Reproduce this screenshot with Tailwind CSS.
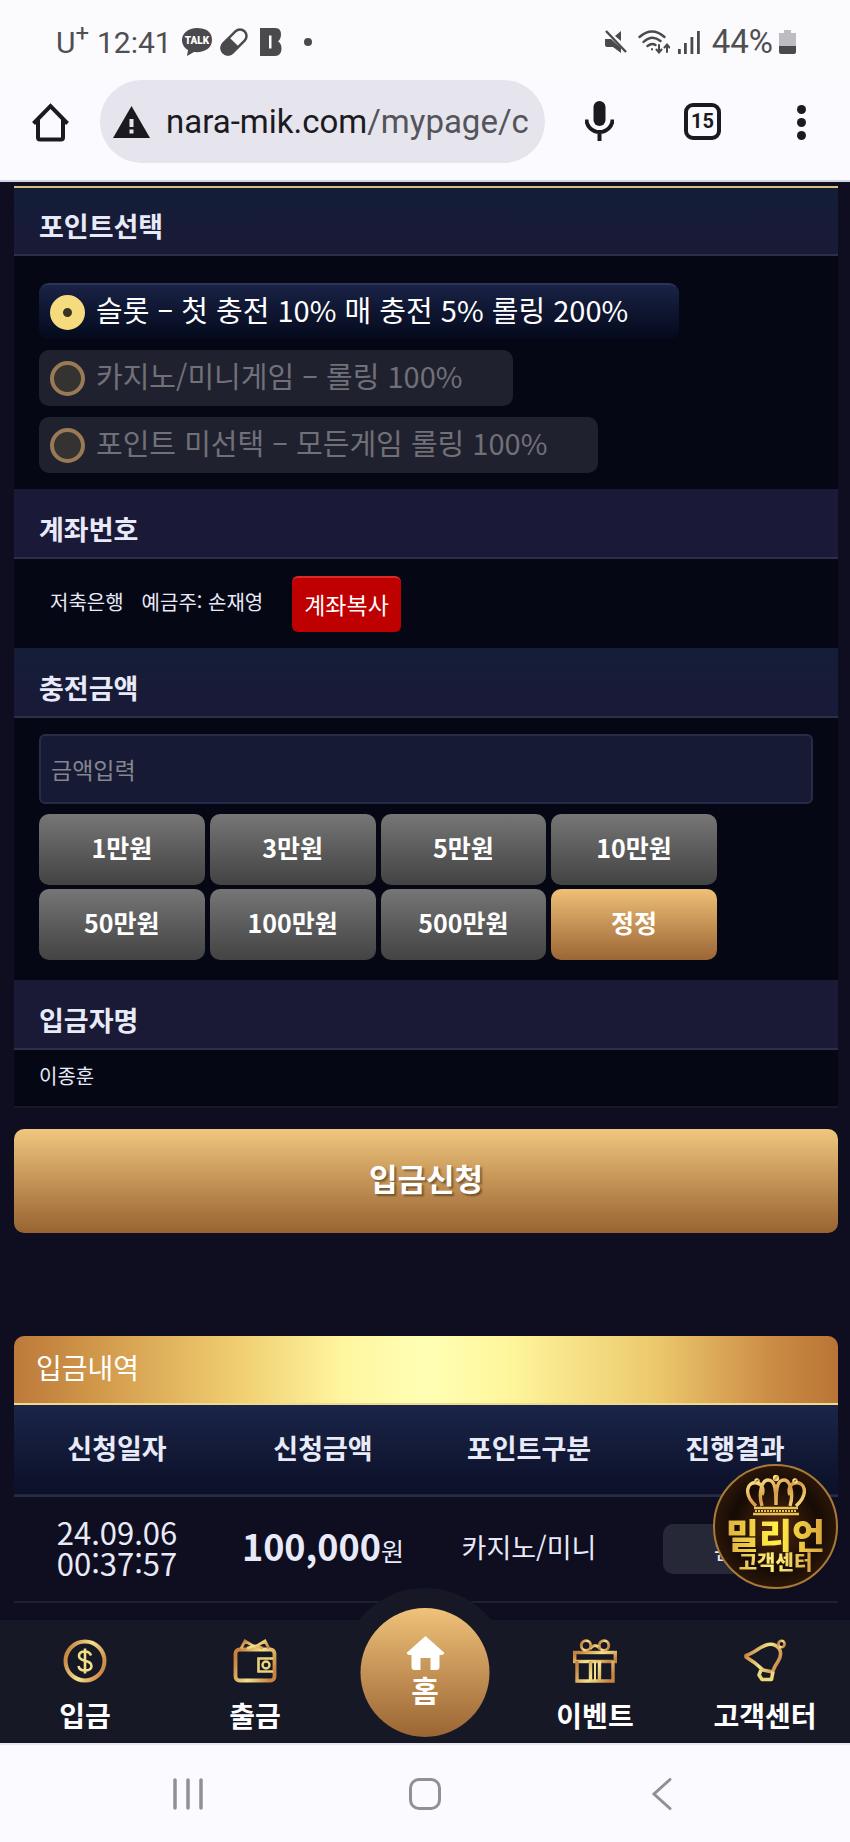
<!DOCTYPE html>
<html lang="ko">

<head>
    <meta charset="UTF-8">
    <meta name="viewport" content="width=device-width, initial-scale=1.0">
    <title>입금신청</title>
    <script src="https://cdn.jsdelivr.net/npm/@tailwindcss/browser@4"></script>
</head>

<body class="bg-[#0e0e20] font-['Noto_Sans_CJK_KR',sans-serif] text-[#e8eaf8]">

    <!-- Status bar -->
    <div class="flex h-20 items-center bg-[#fbfafd] pr-[54px] pl-14 pt-1 font-[Roboto,sans-serif] text-[30px] text-[#4f4e52]">
        <span class="w-[41px]">U<sup class="text-[24px]">+</sup></span>
        <span>12:41</span>
        <svg class="ml-2.5 h-7 w-[30px]" viewBox="0 0 30 28" fill="#4a494d">
            <path d="M15 0C6.500 0 0 5 0 12c0 4.500 2.500 8 6 10l-1 6 7-4c10 1 18-3.500 18-12S23.500 0 15 0z" />
            <text x="15" y="16" text-anchor="middle" font-family="Roboto" font-weight="900" font-size="10" fill="#fff">TALK</text>
        </svg>
        <svg class="ml-2 h-7 w-7" viewBox="0 0 28 28">
            <g transform="rotate(-45 14 14)">
                <rect x="-1" y="7.500" width="30" height="13" rx="6.500" fill="none" stroke="#4a494d" stroke-width="2.500" />
                <path d="M14 6.500v15H5.500a7.500 7.500 0 0 1 0-15z" fill="#4a494d" />
            </g>
        </svg>
        <svg class="ml-3 h-7 w-[22px]" viewBox="0 0 22 28">
            <path d="M0 0h15c5 0 6 3 6 6.500 0 4-2 6-3 7 2 1 3.500 3 3.500 7 0 4-2 7.500-6.500 7.500H0z" fill="#4a494d" />
            <path d="M9 7.500h2.500v13H9z" fill="#fff" />
        </svg>
        <span class="ml-[22px] size-2 rounded-full bg-[#4a494d]"></span>

        <svg class="ml-auto h-6 w-6" viewBox="0 0 24 24" fill="#4a494d">
            <path d="M1 9h6l10 9v5l-8-6H3q-2 0-2-2zM17 1v10l-6-5z" />
            <path d="M2 1l20 21" stroke="#4a494d" stroke-width="2.400" />
        </svg>
        <svg class="ml-2.5 h-6 w-8" viewBox="0 0 32 24" fill="none" stroke="#4a494d" stroke-width="2.400" stroke-linecap="round">
            <path d="M1.500 7Q14-4 26.500 7M5.500 12Q14 4 22.500 11M9.500 16Q14 12.500 17.500 15" />
            <path d="M14 19v.5M21 15v7M18.500 19.500L21 22.500l2.500-3M29 22v-7M26.500 17.500L29 14.500l2.500 3" stroke-width="2" />
        </svg>
        <svg class="ml-2 h-[23px] w-[22px]" viewBox="0 0 22 23" fill="#4a494d">
            <rect x="0" y="18" width="2.800" height="5" />
            <rect x="6" y="12" width="2.800" height="11" />
            <rect x="12.500" y="6" width="2.800" height="17" />
            <rect x="19" y="0" width="2.800" height="23" />
        </svg>
        <span class="ml-3 text-[33px]">44%</span>
        <svg class="ml-1.5 h-6 w-[17px]" viewBox="0 0 17 24">
            <path d="M5 0h7v3h5v14H0V3h5z" fill="#bdbcc1" />
            <path d="M0 16h17v6q0 2-2 2H2q-2 0-2-2z" fill="#4a494d" />
        </svg>
    </div>

    <!-- Address bar -->
    <header class="flex h-[102px] items-start border-b-2 border-[#d3d6e2] bg-[#fbfaff] pr-11 pl-8 font-[Roboto,sans-serif] text-[#1b1a20]">
        <button type="button" aria-label="Home" class="mt-[22px]">
            <svg class="h-10 w-[37px]" viewBox="0 0 37 40" fill="none" stroke="#1b1a20" stroke-width="4">
                <path d="M1.500 21.500L18.500 4l17 17.500M6 18v17.500q0 2 2 2h21q2 0 2-2V18" />
            </svg>
        </button>
        <button type="button" class="ml-[31px] flex h-[83px] min-w-0 flex-1 items-center rounded-full bg-[#e6e5ee] pl-[13px]">
            <svg class="h-8 w-[37px] shrink-0" viewBox="0 0 37 32">
                <path d="M18.500 0L37 32H0z" fill="#1b1a20" />
                <path d="M16.500 13h4v8h-4zM16.500 23.500h4v4h-4z" fill="#e6e5ee" />
            </svg>
            <span class="ml-4 overflow-hidden text-[33px] whitespace-nowrap">nara-mik.com<span class="text-[#55545b]">/mypage/c</span></span>
        </button>
        <button type="button" aria-label="Voice search" class="ml-10 mt-[21px]">
            <svg class="h-10 w-[29px]" viewBox="0 0 29 40">
                <rect x="8.500" y="0" width="12" height="25" rx="6" fill="#1b1a20" />
                <path d="M1.500 18.500a13 12.500 0 0 0 26 0M14.500 31v9" fill="none" stroke="#1b1a20" stroke-width="4" />
            </svg>
        </button>
        <button type="button" class="ml-[70px] mt-[23px] size-[37px] rounded-[9px] border-4 border-[#1b1a20] text-[20px] leading-[29px] font-bold">15</button>
        <button type="button" aria-label="Menu" class="ml-[76px] mt-[25px] flex flex-col gap-1">
            <span class="size-[9px] rounded-full bg-[#1b1a20]"></span>
            <span class="size-[9px] rounded-full bg-[#1b1a20]"></span>
            <span class="size-[9px] rounded-full bg-[#1b1a20]"></span>
        </button>
    </header>

    <main class="pt-1 pr-3 pb-[17px] pl-3.5">
        <form>
            <!-- Point selection -->
            <section class="bg-[#050714]">
                <h2 class="flex h-[70px] items-center border-t-2 border-b-2 border-t-[#d9bf7c] border-b-[#2c3047] bg-linear-to-b from-[#131d38] to-[#1a1a36] px-[25px] pt-2.5 text-[27px] font-bold">포인트선택</h2>
                <div class="flex flex-col items-start gap-[11px] px-[25px] pt-[27px] pb-4 text-[29px]">
                    <label class="flex h-14 items-center gap-[11px] rounded-[10px] border-t-2 border-[#2a355c] bg-linear-to-b from-[#1a2246] to-[#050a1c] pr-[51px] pl-[11px] text-white">
                        <input type="radio" name="point" checked class="size-[35px] appearance-none rounded-full border-[13px] border-[#f5db7e] bg-[#3a3222]">
                        <span class="pb-1">슬롯 – 첫 충전 10% 매 충전 5% 롤링 200%</span>
                    </label>
                    <label class="flex h-14 items-center gap-[11px] rounded-[10px] bg-[#20212e] pr-[51px] pl-[11px] text-[#707079]">
                        <input type="radio" name="point" class="size-[35px] appearance-none rounded-full border-4 border-[#9a7a55] bg-[#343332]">
                        <span class="pb-1">카지노/미니게임 – 롤링 100%</span>
                    </label>
                    <label class="flex h-14 items-center gap-[11px] rounded-[10px] bg-[#20212e] pr-[51px] pl-[11px] text-[#707079]">
                        <input type="radio" name="point" class="size-[35px] appearance-none rounded-full border-4 border-[#9a7a55] bg-[#343332]">
                        <span class="pb-1">포인트 미선택 – 모든게임 롤링 100%</span>
                    </label>
                </div>
            </section>

            <!-- Account number -->
            <section class="bg-[#050714]">
                <h2 class="flex h-[70px] items-center border-b-2 border-[#2c3047] bg-[#1a1a38] px-[25px] pt-3 text-[27px] font-bold">계좌번호</h2>
                <div class="flex h-[89px] items-center px-9 text-[20px]">
                    <span class="pb-1">저축은행</span>
                    <span class="ml-[18px] pb-1">예금주: 손재영</span>
                    <button type="button" class="ml-[29px] h-14 rounded-[6px] border-t-2 border-[#d82a2a] bg-[#bf0000] px-3 text-[23px] text-white">계좌복사</button>
                </div>
            </section>

            <!-- Amount -->
            <section class="bg-[#050714]">
                <h2 class="flex h-[70px] items-center border-b-2 border-[#2c3047] bg-linear-to-b from-[#151d39] to-[#191a37] px-[25px] pt-3 text-[27px] font-bold"><label for="amount">충전금액</label></h2>
                <div class="px-[25px] pt-4 pb-5">
                    <input id="amount" type="text" placeholder="금액입력" class="block h-[70px] w-full rounded-[6px] border-2 border-[#262b48] bg-[#171a35] px-2.5 text-[23px] placeholder:text-[#85868f]">
                    <div class="mt-2.5 grid max-w-[678px] grid-cols-4 gap-x-[5px] gap-y-1 text-[25px] font-bold text-white text-shadow-[2px_2px_2px_#0008]">
                        <button type="button" class="h-[71px] rounded-[10px] bg-linear-to-b from-[#767676] to-[#434343] pb-1">1만원</button>
                        <button type="button" class="h-[71px] rounded-[10px] bg-linear-to-b from-[#767676] to-[#434343] pb-1">3만원</button>
                        <button type="button" class="h-[71px] rounded-[10px] bg-linear-to-b from-[#767676] to-[#434343] pb-1">5만원</button>
                        <button type="button" class="h-[71px] rounded-[10px] bg-linear-to-b from-[#767676] to-[#434343] pb-1">10만원</button>
                        <button type="button" class="h-[71px] rounded-[10px] bg-linear-to-b from-[#767676] to-[#434343] pb-1">50만원</button>
                        <button type="button" class="h-[71px] rounded-[10px] bg-linear-to-b from-[#767676] to-[#434343] pb-1">100만원</button>
                        <button type="button" class="h-[71px] rounded-[10px] bg-linear-to-b from-[#767676] to-[#434343] pb-1">500만원</button>
                        <button type="reset" class="h-[71px] rounded-[10px] bg-linear-to-b from-[#f0c077] to-[#9b6635] pb-1">정정</button>
                    </div>
                </div>
            </section>

            <!-- Depositor -->
            <section class="border-b-2 border-[#161926] bg-[#050714]">
                <h2 class="flex h-[70px] items-center border-b-2 border-[#2c3047] bg-[#1a1a36] px-[25px] pt-3 text-[27px] font-bold">입금자명</h2>
                <p class="h-14 px-[25px] text-[20px] leading-[51px]">이종훈</p>
            </section>

            <button type="submit" class="mt-[21px] h-[104px] w-full rounded-[10px] bg-linear-to-b from-[#f0c77e] to-[#986331] pb-1.5 text-[31px] font-bold text-white text-shadow-[2px_2px_2px_#0006]">입금신청</button>
        </form>

        <!-- Deposit history -->
        <section class="relative mt-[103px]">
            <h2 class="flex h-[69px] items-center rounded-t-[10px] border-b-2 border-[#f0d994] bg-[linear-gradient(90deg,#bd793b_0%,#cf9548_9%,#f0cd70_27%,#fff6a0_40%,#ffffb4_50%,#fff69c_60%,#ecc86c_78%,#cb8c45_92%,#b97435_100%)] px-[22px] pb-1.5 text-[28px] text-white">입금내역</h2>
            <table class="w-full table-fixed text-center text-[27px]">
                <thead>
                    <tr class="h-[91px] border-b-2 border-[#292b40] bg-linear-to-b from-[#1a2548] to-[#0c1028]">
                        <th class="pb-1">신청일자</th>
                        <th class="pb-1">신청금액</th>
                        <th class="pb-1">포인트구분</th>
                        <th class="pb-1">진행결과</th>
                    </tr>
                </thead>
                <tbody>
                    <tr class="h-[106px] border-b-2 border-[#1e1f30]">
                        <td class="pb-1 text-[31px] leading-[31px]">24.09.06<br>00:37:57</td>
                        <td class="pb-2 text-[25px]"><strong class="text-[36px]">100,000</strong>원</td>
                        <td class="pb-1">카지노/미니</td>
                        <td><button type="button" class="h-[50px] w-[144px] rounded-[10px] bg-[#262737] text-[23px]">완료</button></td>
                    </tr>
                </tbody>
            </table>

            <!-- Floating customer center badge -->
            <a href="#" class="absolute top-32 right-0 flex size-[125px] flex-col items-center rounded-full border-2 border-[#a87a38] bg-radial from-[#5a2a0c] via-[#160b05] to-[#4a270c] pt-[9px]">
                <svg class="h-[41px] w-[60px]" viewBox="0 0 60 41" fill="none" stroke="url(#gold)" stroke-width="3.400">
                    <path d="M10 31C-4 18 2 6 11 8c6 1 7 8 5 12M16 31C12 18 16 5 22 5c6 0 8 6 8 25M50 31C64 18 58 6 49 8c-6 1-7 8-5 12M44 31C48 18 44 5 38 5c-6 0-8 6-8 25" />
                    <path d="M8 33h44M7 39h46" stroke="#e8c255" stroke-width="2.500" />
                    <path d="M9 36h42" stroke="#e8c255" stroke-width="2" stroke-dasharray="2 1" />
                    <circle cx="30" cy="3" r="1.500" />
                    <circle cx="11" cy="6" r="1" />
                    <circle cx="49" cy="6" r="1" />
                </svg>
                <span class="bg-linear-to-r from-[#e0b03f] via-[#fff046] to-[#d9a33b] bg-clip-text text-[36px] leading-9 font-black text-transparent">밀리언</span>
                <span class="bg-linear-to-r from-[#e8bd4f] via-[#fff27a] to-[#d9a33b] bg-clip-text text-[20px] leading-5 font-black text-transparent">고객센터</span>
            </a>
        </section>
    </main>

    <!-- Bottom menu -->
    <nav class="relative grid h-[123px] grid-cols-5 bg-[#171826] text-center text-[28px] leading-[30px] font-bold text-white">
        <svg class="absolute size-0">
            <defs>
                <linearGradient id="gold" x1="0" y1="0" x2="1" y2="1">
                    <stop offset="0" stop-color="#ffe98f" />
                    <stop offset="0.5" stop-color="#d99a45" />
                    <stop offset="1" stop-color="#f6e283" />
                </linearGradient>
                <linearGradient id="rim" x1="0" y1="0.3" x2="1" y2="0.7">
                    <stop offset="0" stop-color="#c8843f" />
                    <stop offset="0.5" stop-color="#f3e38a" />
                    <stop offset="1" stop-color="#c8843f" />
                </linearGradient>
            </defs>
        </svg>
        <a href="#" class="flex flex-col items-center gap-[17px] pt-[19px]">
            <svg class="size-[44px]" viewBox="0 0 44 44" fill="none" stroke="url(#rim)" stroke-width="4">
                <circle cx="22" cy="22" r="19.500" />
                <path d="M28 16.500c-1-3-3.500-4-6-4-3.500 0-6 1.500-6 4.500 0 6.500 12.500 3 12.500 10 0 3-3 4.500-6.500 4.500-3 0-6-1.500-6.500-4.500M22 9.500v25" stroke="#f2df86" stroke-width="2.600" />
            </svg>
            입금
        </a>
        <a href="#" class="flex flex-col items-center gap-[17px] pt-[19px]">
            <svg class="size-[44px]" viewBox="0 0 44 44" fill="none" stroke="url(#rim)" stroke-width="3.800">
                <rect x="2.500" y="10.500" width="39" height="31" rx="4" />
                <path d="M8 9.500L12 2l10 6 10-6 4 7.500M14 9l8-2 8 2" stroke-width="2.800" />
                <path d="M40 19.500H25.500v13H40" stroke="#ecd47c" stroke-width="2.600" />
                <circle cx="33" cy="26" r="3.500" stroke="#ecd47c" stroke-width="2.400" />
            </svg>
            출금
        </a>
        <div></div>
        <a href="#" class="flex flex-col items-center gap-[17px] pt-[19px]">
            <svg class="size-[44px]" viewBox="0 0 44 44" fill="none" stroke="url(#rim)" stroke-width="3.400">
                <rect x="1.700" y="13.500" width="40.600" height="9" />
                <path d="M4 22v20h36V22M17.500 22v20M26.500 22v20" />
                <path d="M22 22.500v19" stroke="#f3e38a" stroke-width="2" />
                <circle cx="13" cy="6.500" r="4.800" stroke-width="2.800" />
                <circle cx="31" cy="6.500" r="4.800" stroke-width="2.800" />
                <path d="M17 10q5-7 10 0" stroke-width="2.800" />
            </svg>
            이벤트
        </a>
        <a href="#" class="flex flex-col items-center gap-[17px] pt-[19px]">
            <svg class="size-[44px]" viewBox="0 0 44 44" fill="none" stroke="url(#rim)" stroke-width="3.600" stroke-linejoin="round">
                <path d="M3 16.500C12 14 17 7 25 5.500c5-1 8 0 11 4 3 4 2 8-1 13-3 4-4 7-5.500 10.500L20 31 12 24 3 18z" />
                <path d="M18 31l-2 5 3 4.500h9.500l1.500-8" stroke="#ecd97c" />
                <circle cx="38.500" cy="5" r="3.200" stroke-width="2.600" />
            </svg>
            고객센터
        </a>
        <a href="#" class="absolute -top-8 left-1/2 flex size-[169px] -translate-x-1/2 items-start justify-center rounded-full bg-[#171826] pt-5 [clip-path:inset(0_0_14px_0)]">
            <span class="flex size-[129px] flex-col items-center gap-1 rounded-full bg-linear-to-b from-[#f0c27a] to-[#9a6533] pt-7 text-[30px]">
                <svg class="h-[34px] w-[38px]" viewBox="0 0 38 34" fill="#fff">
                    <path d="M19 0l19 17q-1 2-3 2h-2v12q0 3-3 3h-6V22h-10v12H8q-3 0-3-3V19H3q-2 0-3-2z" />
                </svg>
                홈
            </span>
        </a>
    </nav>

    <!-- Phone navigation -->
    <footer class="grid h-[99px] grid-cols-3 items-center justify-items-center border-t-2 border-[#e6e7f0] bg-[#fbfaff] px-[70px]">
        <button type="button" aria-label="Recent apps">
            <svg class="h-8 w-8" viewBox="0 0 32 32" stroke="#929097" stroke-width="3.500" stroke-linecap="round">
                <path d="M3 2v28M16 2v28M29 2v28" />
            </svg>
        </button>
        <button type="button" aria-label="Home screen" class="size-8 rounded-[10px] border-[3px] border-[#929097]"></button>
        <button type="button" aria-label="Back">
            <svg class="h-8 w-5" viewBox="0 0 20 32" fill="none" stroke="#929097" stroke-width="3" stroke-linecap="round">
                <path d="M18 1.500L2 16l16 14.500" />
            </svg>
        </button>
    </footer>

</body>

</html>
